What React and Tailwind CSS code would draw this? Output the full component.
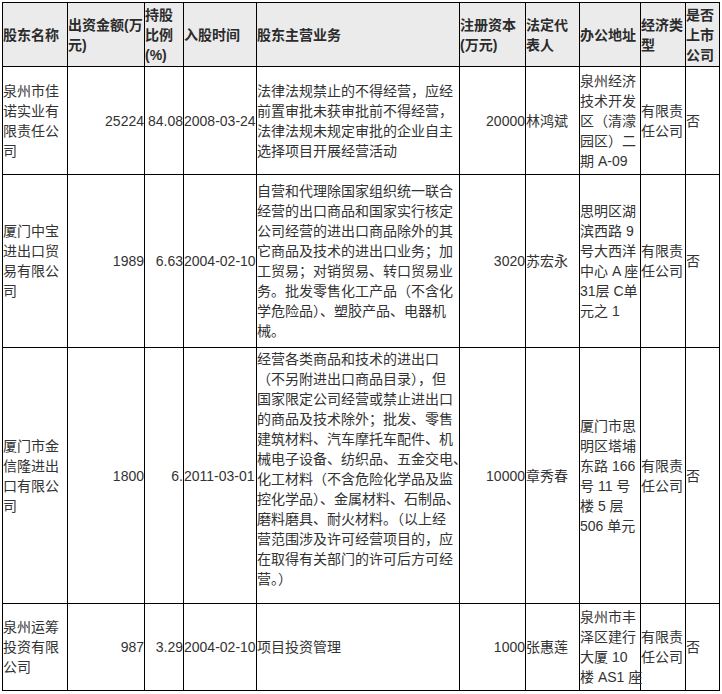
import React from 'react';

const headers = [
  ['股东名称'],
  ['出资金额(万', '元)'],
  ['持股', '比例', '(%)'],
  ['入股时间'],
  ['股东主营业务'],
  ['注册资本', '(万元)'],
  ['法定代', '表人'],
  ['办公地址'],
  ['经济类', '型'],
  ['是否', '上市', '公司'],
];

const widths = ['w-[65px]', 'w-[77px]', 'w-[39px]', 'w-[73px]', 'w-[203px]', 'w-[66px]', 'w-[54px]', 'w-[61px]', 'w-[45px]', 'w-[34px]'];

const rows = [
  {
    h: 'h-[108px]',
    name: ['泉州市佳', '诺实业有', '限责任公', '司'],
    amount: '25224',
    ratio: '84.08',
    date: '2008-03-24',
    business: ['法律法规禁止的不得经营，应经', '前置审批未获审批前不得经营，', '法律法规未规定审批的企业自主', '选择项目开展经营活动'],
    capital: '20000',
    rep: '林鸿斌',
    address: ['泉州经济', '技术开发', '区（清濛', '园区）二', '期 A-09'],
    type: ['有限责', '任公司'],
    listed: '否',
  },
  {
    h: 'h-[173px]',
    name: ['厦门中宝', '进出口贸', '易有限公', '司'],
    amount: '1989',
    ratio: '6.63',
    date: '2004-02-10',
    business: [
      '自营和代理除国家组织统一联合',
      '经营的出口商品和国家实行核定',
      '公司经营的进出口商品除外的其',
      '它商品及技术的进出口业务；加',
      '工贸易；对销贸易、转口贸易业',
      '务。批发零售化工产品（不含化',
      '学危险品）、塑胶产品、电器机',
      '械。',
    ],
    capital: '3020',
    rep: '苏宏永',
    address: ['思明区湖', '滨西路 9', '号大西洋', '中心 A 座', '31层 C单', '元之 1'],
    type: ['有限责', '任公司'],
    listed: '否',
  },
  {
    h: 'h-[256px]',
    name: ['厦门市金', '信隆进出', '口有限公', '司'],
    amount: '1800',
    ratio: '6.',
    date: '2011-03-01',
    business: [
      '经营各类商品和技术的进出口',
      '（不另附进出口商品目录），但',
      '国家限定公司经营或禁止进出口',
      '的商品及技术除外；批发、零售',
      '建筑材料、汽车摩托车配件、机',
      '械电子设备、纺织品、五金交电、',
      '化工材料（不含危险化学品及监',
      '控化学品）、金属材料、石制品、',
      '磨料磨具、耐火材料。（以上经',
      '营范围涉及许可经营项目的，应',
      '在取得有关部门的许可后方可经',
      '营。）',
    ],
    pad: 'pb-[14px]',
    capital: '10000',
    rep: '章秀春',
    address: ['厦门市思', '明区塔埔', '东路 166', '号 11 号', '楼 5 层', '506 单元'],
    type: ['有限责', '任公司'],
    listed: '否',
  },
  {
    h: 'h-[87px]',
    name: ['泉州运筹', '投资有限', '公司'],
    amount: '987',
    ratio: '3.29',
    date: '2004-02-10',
    business: ['项目投资管理'],
    capital: '1000',
    rep: '张惠莲',
    address: ['泉州市丰', '泽区建行', '大厦 10', '楼 AS1 座'],
    type: ['有限责', '任公司'],
    listed: '否',
  },
];

function Lines({ items }) {
  return items.map((t, i) => (
    <span key={i} className="block whitespace-nowrap">
      {t}
    </span>
  ));
}

const td = 'border border-black p-0 align-middle';

export default function App() {
  return (
    <div className="min-h-screen bg-white pl-[2px] pt-[2px] font-['Liberation_Sans','Noto_Sans_CJK_SC',sans-serif] text-[14px] leading-[20px] text-[#333]">
      <table className="w-[718px] table-fixed border-collapse">
        <colgroup>
          {widths.map((w, i) => (
            <col key={i} className={w} />
          ))}
        </colgroup>
        <thead>
          <tr className="h-[64px] bg-[#ebebeb]">
            {headers.map((h, i) => (
              <th key={i} className={`${td} text-left font-bold text-[#2b2b2b]`}>
                <Lines items={h} />
              </th>
            ))}
          </tr>
        </thead>
        <tbody>
          {rows.map((r, i) => (
            <tr key={i} className={r.h}>
              <td className={td}>
                <Lines items={r.name} />
              </td>
              <td className={`${td} text-right`}>{r.amount}</td>
              <td className={`${td} text-right`}>{r.ratio}</td>
              <td className={`${td} whitespace-nowrap`}>{r.date}</td>
              <td className={`${td} ${r.pad || ''}`}>
                <Lines items={r.business} />
              </td>
              <td className={`${td} text-right`}>{r.capital}</td>
              <td className={td}>{r.rep}</td>
              <td className={td}>
                <Lines items={r.address} />
              </td>
              <td className={td}>
                <Lines items={r.type} />
              </td>
              <td className={td}>{r.listed}</td>
            </tr>
          ))}
        </tbody>
      </table>
    </div>
  );
}
